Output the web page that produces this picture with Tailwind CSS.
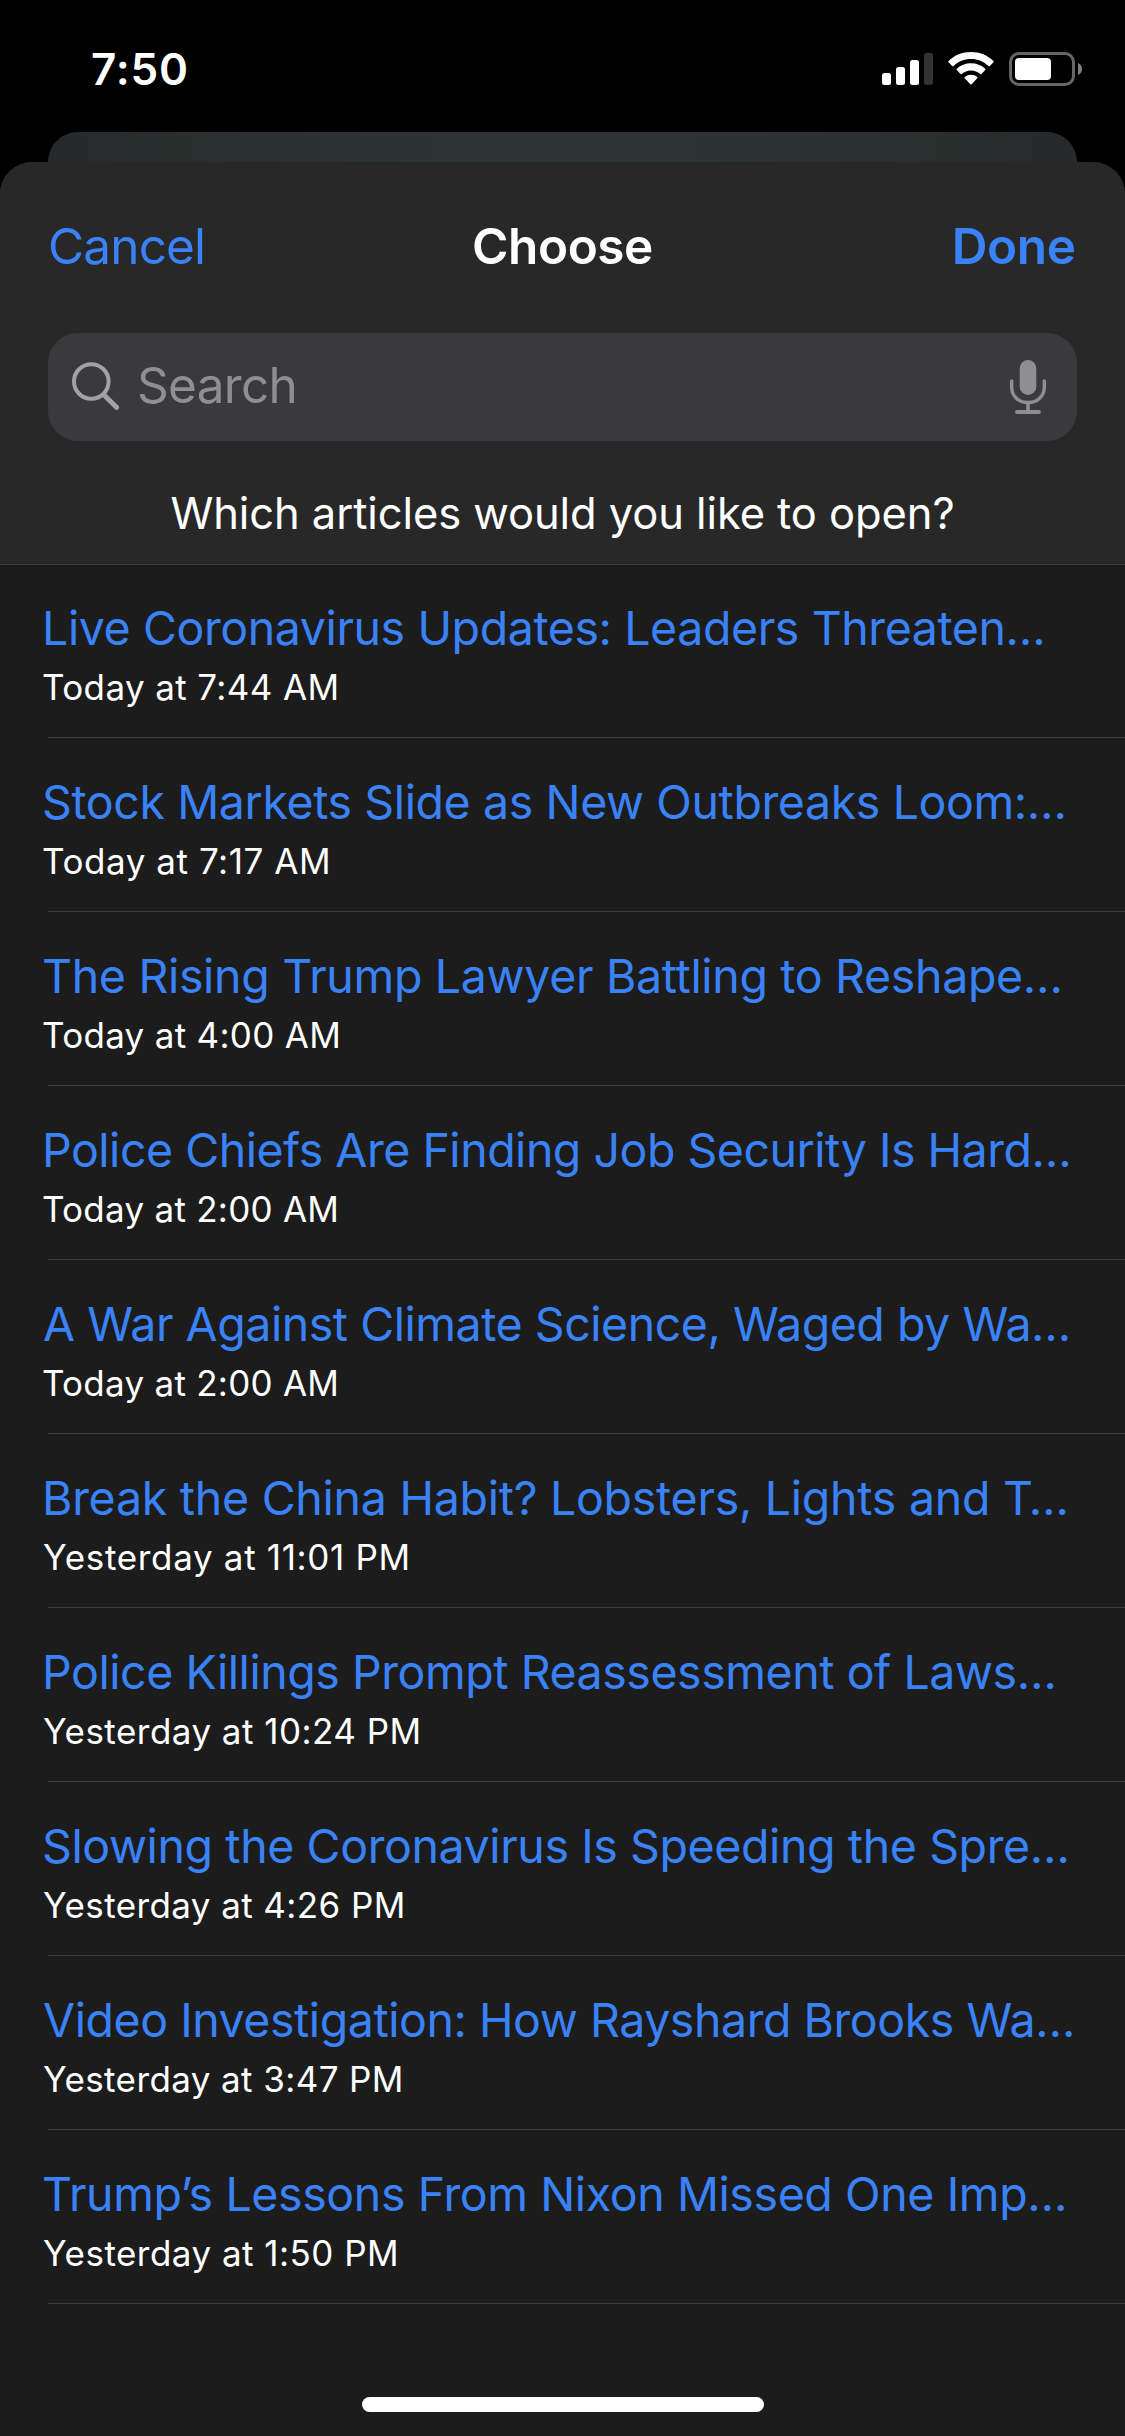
<!DOCTYPE html>
<html lang="en">
<head>
<meta charset="utf-8">
<title>Choose</title>
<script src="https://cdn.jsdelivr.net/npm/@tailwindcss/browser@4"></script>
</head>
<body class="bg-black">
<div class="flex h-[2436px] w-[1125px] flex-col overflow-hidden bg-black font-['Inter',sans-serif] text-white">

  <!-- Status bar -->
  <div class="flex h-[132px] shrink-0 items-start justify-between pt-[42px] pr-[43px] pl-[91px]">
    <span class="text-[44px] leading-[54px] font-semibold tracking-[0.8px]">7:50</span>
    <div class="flex items-start pt-[10px]">
      <svg class="h-[34px] w-[51px]" viewBox="0 0 51 34" fill="#fff">
        <rect x="0" y="21" width="9" height="12" rx="2.5"/>
        <rect x="14" y="15" width="9" height="18" rx="2.5"/>
        <rect x="28" y="8" width="9" height="25" rx="2.5"/>
        <rect x="42" y="1" width="9" height="32" rx="2.5" fill="#333"/>
      </svg>
      <svg class="ml-[15px] h-[34px] w-[46px]" viewBox="0 0 46 34" fill="#fff">
        <path d="M23 0C14.4 0 6.500 3.300 0.500 8.900C0.100 9.300 0.100 9.900 0.500 10.300L4.200 14.100C4.600 14.500 5.100 14.500 5.500 14.100C10.200 9.700 16.300 7.100 23 7.100S35.800 9.700 40.500 14.100C40.900 14.500 41.400 14.500 41.800 14.100L45.500 10.300C45.900 9.900 45.900 9.300 45.500 8.900C39.500 3.300 31.600 0 23 0Z"/>
        <path d="M23 11.300C17.500 11.300 12.600 13.300 8.800 16.700C8.400 17.100 8.400 17.700 8.800 18.100L12.500 21.900C12.900 22.300 13.400 22.300 13.800 21.900C16.300 19.800 19.500 18.500 23 18.500S29.700 19.800 32.200 21.900C32.600 22.300 33.100 22.300 33.500 21.900L37.200 18.100C37.600 17.700 37.600 17.100 37.200 16.700C33.400 13.300 28.500 11.300 23 11.300Z"/>
        <path d="M23 22.800C20.700 22.800 18.600 23.600 16.800 24.900C16.400 25.300 16.400 25.900 16.800 26.300L22.300 32.200C22.700 32.600 23.300 32.600 23.700 32.200L29.200 26.300C29.600 25.900 29.600 25.300 29.200 24.900C27.400 23.600 25.300 22.800 23 22.800Z"/>
      </svg>
      <svg class="ml-[15px] h-[34px] w-[73px]" viewBox="0 0 73 34">
        <rect x="1.500" y="1.500" width="63" height="31" rx="8.500" fill="none" stroke="#666" stroke-width="3"/>
        <rect x="6" y="6" width="36" height="22" rx="4" fill="#fff"/>
        <path d="M69 11C71.500 12 73 14.200 73 17S71.500 22 69 23Z" fill="#808080"/>
      </svg>
    </div>
  </div>

  <!-- Edge of the sheet underneath -->
  <div class="mx-12 h-[30px] shrink-0 rounded-t-[30px] bg-linear-to-r from-[#262929] via-[#2b3232] to-[#262929]">
    <div class="h-full rounded-t-[30px] bg-linear-to-r from-transparent via-[#2d3534] to-transparent"></div>
  </div>

  <!-- Sheet -->
  <div class="flex min-h-0 grow flex-col overflow-hidden rounded-t-[32px] bg-[#1c1c1c]">
    <header class="flex h-[403px] shrink-0 flex-col border-b border-[#3d3d3f] bg-[#282828]">
      <nav class="grid h-[171px] grid-cols-3 px-12 pt-[54px] text-[49.5px] leading-[60px]">
        <span class="tracking-[-0.85px] text-[#3a82f7]">Cancel</span>
        <h1 class="text-center font-semibold tracking-[-0.45px]">Choose</h1>
        <span class="pr-[1.5px] text-right font-semibold tracking-[-0.4px] text-[#3a82f7]">Done</span>
      </nav>
      <div class="mx-12 flex h-[108px] shrink-0 items-center rounded-[30px] bg-[#3a3a3c] pr-[31px] pl-6">
        <svg class="mt-[-2px] h-[48px] w-[48px]" viewBox="0 0 48 48" fill="none" stroke="#a1a1a8" stroke-linecap="round">
          <circle cx="19.300" cy="19.500" r="17.300" stroke-width="4"/>
          <path d="M32 33L44.500 45.300" stroke-width="5"/>
        </svg>
        <span class="mt-[-5px] ml-[17px] grow text-[49.5px] leading-[60px] tracking-[-0.7px] text-[#8e8e93]">Search</span>
        <svg class="mt-[-1px] h-[54px] w-[36px]" viewBox="0 0 36 54" fill="none" stroke="#8e8e93" stroke-linecap="round">
          <rect x="9.700" y="0" width="16.600" height="35" rx="8.300" fill="#8e8e93" stroke="none"/>
          <path d="M1.700 21V27C1.700 36.200 8.600 42.500 18 42.500S34.300 36.200 34.300 27V21" stroke-width="3.400"/>
          <path d="M18 43V51" stroke-width="3.600"/>
          <path d="M7 52H29" stroke-width="3.800"/>
        </svg>
      </div>
      <p class="mt-[46px] text-center text-[43.5px] leading-[52px] tracking-[-0.09px]">Which articles would you like to open?</p>
    </header>

    <ul class="flex flex-col pl-12 text-[46.5px] whitespace-nowrap">
      <li class="h-[173px] border-b border-[#3d3d3f] pt-[35px]">
        <h2 class="ml-[-6px] leading-[56px] tracking-[-0.41px] text-[#3a82f7]">Live Coronavirus Updates: Leaders Threaten…</h2>
        <p class="mt-[9px] ml-[-6px] text-[35px] leading-[44px] tracking-[0.38px]">Today at 7:44 AM</p>
      </li>
      <li class="h-[174px] border-b border-[#3d3d3f] pt-[36px]">
        <h2 class="ml-[-6px] leading-[56px] tracking-[-0.4px] text-[#3a82f7]">Stock Markets Slide as New Outbreaks Loom:…</h2>
        <p class="mt-[9px] ml-[-6px] text-[35px] leading-[44px] tracking-[0.56px]">Today at 7:17 AM</p>
      </li>
      <li class="h-[174px] border-b border-[#3d3d3f] pt-[36px]">
        <h2 class="ml-[-6px] leading-[56px] tracking-[-0.33px] text-[#3a82f7]">The Rising Trump Lawyer Battling to Reshape…</h2>
        <p class="mt-[9px] ml-[-6px] text-[35px] leading-[44px] tracking-[0.3px]">Today at 4:00 AM</p>
      </li>
      <li class="h-[174px] border-b border-[#3d3d3f] pt-[36px]">
        <h2 class="ml-[-6px] leading-[56px] tracking-[-0.49px] text-[#3a82f7]">Police Chiefs Are Finding Job Security Is Hard…</h2>
        <p class="mt-[9px] ml-[-6px] text-[35px] leading-[44px] tracking-[0.26px]">Today at 2:00 AM</p>
      </li>
      <li class="h-[174px] border-b border-[#3d3d3f] pt-[36px]">
        <h2 class="ml-[-5px] leading-[56px] tracking-[-0.46px] text-[#3a82f7]">A War Against Climate Science, Waged by Wa…</h2>
        <p class="mt-[9px] ml-[-6px] text-[35px] leading-[44px] tracking-[0.26px]">Today at 2:00 AM</p>
      </li>
      <li class="h-[174px] border-b border-[#3d3d3f] pt-[36px]">
        <h2 class="ml-[-6px] leading-[56px] tracking-[-0.27px] text-[#3a82f7]">Break the China Habit? Lobsters, Lights and T…</h2>
        <p class="mt-[9px] ml-[-5px] text-[35px] leading-[44px] tracking-[0.67px]">Yesterday at 11:01 PM</p>
      </li>
      <li class="h-[174px] border-b border-[#3d3d3f] pt-[36px]">
        <h2 class="ml-[-6px] leading-[56px] tracking-[-0.45px] text-[#3a82f7]">Police Killings Prompt Reassessment of Laws…</h2>
        <p class="mt-[9px] ml-[-5px] text-[35px] leading-[44px] tracking-[0.47px]">Yesterday at 10:24 PM</p>
      </li>
      <li class="h-[174px] border-b border-[#3d3d3f] pt-[36px]">
        <h2 class="ml-[-6px] leading-[56px] tracking-[-0.4px] text-[#3a82f7]">Slowing the Coronavirus Is Speeding the Spre…</h2>
        <p class="mt-[9px] ml-[-5px] text-[35px] leading-[44px] tracking-[0.4px]">Yesterday at 4:26 PM</p>
      </li>
      <li class="h-[174px] border-b border-[#3d3d3f] pt-[36px]">
        <h2 class="ml-[-5px] leading-[56px] tracking-[-0.45px] text-[#3a82f7]">Video Investigation: How Rayshard Brooks Wa…</h2>
        <p class="mt-[9px] ml-[-5px] text-[35px] leading-[44px] tracking-[0.39px]">Yesterday at 3:47 PM</p>
      </li>
      <li class="h-[174px] border-b border-[#3d3d3f] pt-[36px]">
        <h2 class="ml-[-6px] leading-[56px] tracking-[-0.4px] text-[#3a82f7]">Trump’s Lessons From Nixon Missed One Imp…</h2>
        <p class="mt-[9px] ml-[-5px] text-[35px] leading-[44px] tracking-[0.48px]">Yesterday at 1:50 PM</p>
      </li>
    </ul>

    <!-- Home indicator -->
    <div class="mx-auto mt-auto mb-6 h-[15px] w-[402px] shrink-0 rounded-full bg-white"></div>
  </div>
</div>
</body>
</html>
